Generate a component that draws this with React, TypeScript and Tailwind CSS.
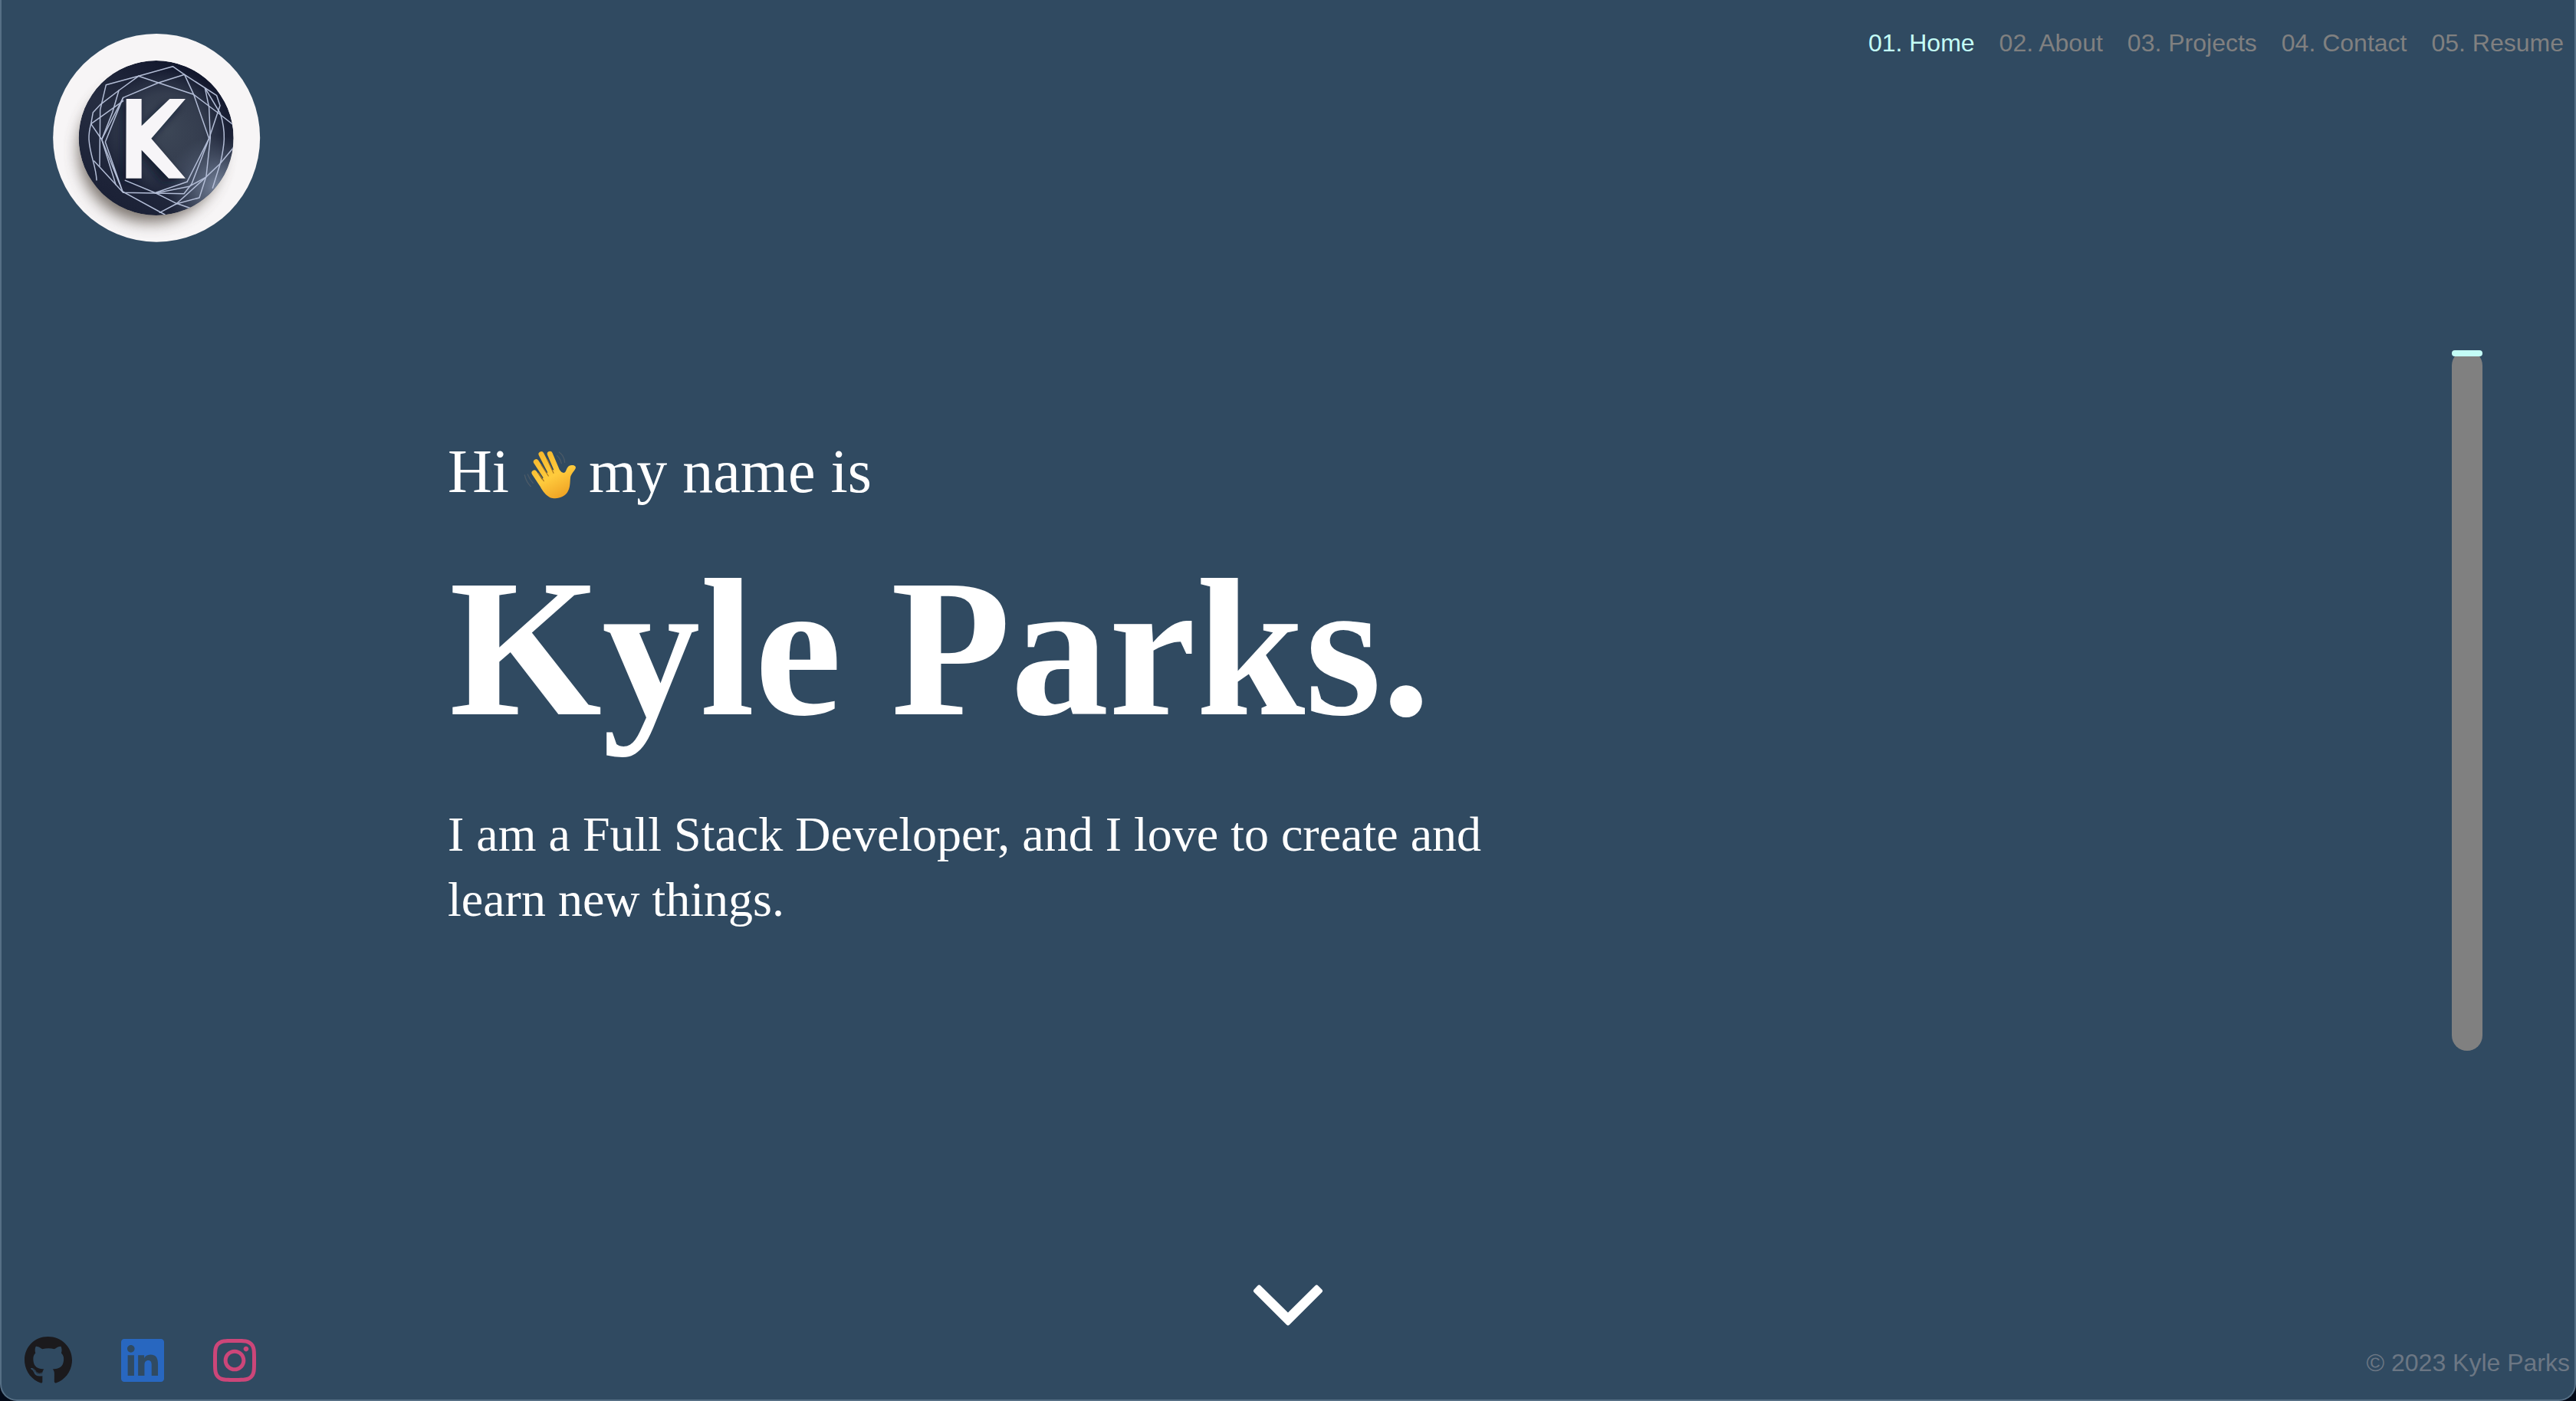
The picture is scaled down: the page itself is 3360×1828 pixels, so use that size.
import React from "react";
import { FaGithub, FaInstagram, FaLinkedin } from "react-icons/fa";

const links = ["01. Home", "02. About", "03. Projects", "04. Contact", "05. Resume"];

function Logo() {
  return (
    <svg className="h-[300px] w-[310px]" viewBox="0 0 930 900" fill="none">
      <defs>
        <linearGradient id="disc" x1="640" y1="190" x2="330" y2="720" gradientUnits="userSpaceOnUse">
          <stop offset="0" stopColor="#11162c" />
          <stop offset="0.5" stopColor="#262d41" />
          <stop offset="1" stopColor="#1b2136" />
        </linearGradient>
        <radialGradient id="core" cx="500" cy="420" r="240" gradientUnits="userSpaceOnUse">
          <stop offset="0" stopColor="#3c4656" />
          <stop offset="0.6" stopColor="#384152" stopOpacity="0.85" />
          <stop offset="1" stopColor="#374153" stopOpacity="0" />
        </radialGradient>
        <radialGradient id="glow" cx="700" cy="640" r="200" gradientUnits="userSpaceOnUse">
          <stop offset="0" stopColor="#75829a" />
          <stop offset="0.4" stopColor="#5b677d" stopOpacity="0.8" />
          <stop offset="1" stopColor="#4a566a" stopOpacity="0" />
        </radialGradient>
        <filter id="soft" x="-30%" y="-30%" width="160%" height="160%">
          <feGaussianBlur stdDeviation="28" />
        </filter>
        <filter id="softK" x="-30%" y="-30%" width="160%" height="160%">
          <feGaussianBlur stdDeviation="14" />
        </filter>
        <clipPath id="ring">
          <ellipse cx="462.500" cy="449.500" rx="405" ry="407.500" />
        </clipPath>
        <clipPath id="inner">
          <circle cx="461" cy="450" r="303" />
        </clipPath>
      </defs>
      <ellipse cx="462.500" cy="449.500" rx="405" ry="407.500" fill="#f7f5f6" />
      <g clipPath="url(#ring)">
        <circle cx="438" cy="500" r="280" fill="#5a5149" opacity="0.8" filter="url(#soft)" />
      </g>
      <g clipPath="url(#inner)">
        <circle cx="461" cy="450" r="303" fill="url(#disc)" />
        <circle cx="500" cy="420" r="240" fill="url(#core)" />
        <circle cx="700" cy="640" r="200" fill="url(#glow)" />
        <path d="M330 310h62v110l100-100h65L430 460l130 160h-80l-90-110v110h-60z" fill="#11172b" opacity="0.75" filter="url(#softK)" />
        <g stroke="#b3bdd6" strokeWidth="4.500" strokeLinejoin="round" strokeLinecap="round">
          <path d="M206 395 L214 350 L242 320 L315 264 L392 208 L526 170 L572 202 L698 284 L711 323 L668 452" />
          <path d="M392 208 L265 242 L242 340 L240 560" />
          <path d="M228 615C226 560 202 520 198 455C197 430 202 410 206 395L332 305" />
          <path d="M392 208 L470 234 L608 280 L706 354 L765 400" />
          <path d="M582 622 L460 664 M572 202 L470 234 L332 292 L248 456 L303 632" />
          <path d="M332 292 L262 466 L330 660 L248 456" />
          <path d="M315 264 L290 350 L248 456 L206 395" />
          <path d="M572 202 L608 280 L668 452 L582 622" />
          <path d="M652 254 L668 330 L673 450 L657 600 L630 684 L540 708 L475 742" />
          <path d="M652 254 L712 354C736 430 728 480 712 550L682 646" />
          <path d="M668 452 L600 630 L570 668 L332 664 L218 540" />
          <path d="M765 486 L710 552 L655 604 L590 640 L460 666" />
          <path d="M340 616 L460 666 L540 706 L592 724" />
          <path d="M655 604 L540 708" />
          <path d="M330 660 L495 750" />
        </g>
        <path d="M344 297h60v106l110-106h62L442 452l134 156h-66L404 497v111h-61z" fill="#f7f5f8" />
      </g>
    </svg>
  );
}

function WavingHand() {
  return (
    <svg className="mr-4 ml-[18px] inline-block h-[84px] w-[70px] align-[-18px]" viewBox="36 0 210 252" fill="none">
      <defs>
        <linearGradient id="skin" x1="90" y1="42" x2="186" y2="222" gradientUnits="userSpaceOnUse">
          <stop offset="0" stopColor="#f5b62c" />
          <stop offset="0.55" stopColor="#ffcb3d" />
          <stop offset="1" stopColor="#efa224" />
        </linearGradient>
      </defs>
      <g stroke="url(#skin)" strokeLinecap="round" strokeWidth="21">
        <path d="M142 49 172 120" />
        <path d="M108 50 150 132" />
        <path d="M88 80 134 150" />
        <path d="M81 123 116 176" />
      </g>
      <path d="M107 172 112 148 128 124 150 112 180 112C188 124 198 126 203 118C209 108 209 98 222 94C234 90 246 96 242 106C236 118 224 128 222 142C220 160 222 178 212 196C202 216 176 226 152 222C132 218 118 200 107 182z" fill="url(#skin)" />
      <g stroke="#a87420" strokeWidth="3.500" strokeLinecap="round">
        <path d="M131 70 156 124" />
        <path d="M108 92 136 135" />
        <path d="M97 124 118 155" />
      </g>
      <g stroke="#4b5a67" strokeWidth="4" strokeLinecap="round">
        <path d="M43 132Q50 160 67 176" />
        <path d="M55 129Q62 148 76 163" />
        <path d="M178 42Q198 56 200 82" />
        <path d="M170 56Q182 66 187 86" />
      </g>
    </svg>
  );
}

function ScrollTrack() {
  return (
    <div className="h-[914px] w-10 rounded-full bg-[#808080]">
      <div className="h-2 w-full rounded-full bg-[#c4fdf6]" />
    </div>
  );
}

export default function App() {
  return (
    <div className="h-[1828px] w-[3360px] overflow-hidden bg-[#030a18]">
      <div className="flex h-[1828px] flex-col rounded-b-[22px] border-x-2 border-b-2 border-[#566f85] bg-[#304a61] font-['Liberation_Sans',Arial,sans-serif] text-[32px]">
        <header className="flex h-[457px] items-start justify-between pt-[30px] pl-12">
          <Logo />
          <nav className="flex gap-8 pr-[14px] leading-[52px] text-[#808080]">
            {links.map((label, i) => (
              <a key={label} className={i === 0 ? "text-[#c4fdf6]" : ""}>
                {label}
              </a>
            ))}
          </nav>
        </header>
        <main className="flex h-[1200px] justify-between pr-[120px] pl-[582px] font-['Liberation_Serif','Times_New_Roman',serif] text-white">
          <div className="w-[1400px] pt-[112px]">
            <p className="h-[92px] text-[80px] leading-[92px] whitespace-nowrap">
              Hi
              <WavingHand />
              my name is
            </p>
            <h1 className="mt-[35px] ml-[2px] text-[256px] leading-[300px] font-bold whitespace-nowrap">Kyle Parks.</h1>
            <p className="mt-[50px] text-[64px] leading-[85px]">
              I am a Full Stack Developer, and I love to create and
              <br />
              learn new things.
            </p>
          </div>
          <ScrollTrack />
        </main>
        <div className="flex h-[86px] justify-center pt-[19px]">
          <svg className="h-[54px] w-[92px]" viewBox="102 78 276 162">
            <path d="M113 103 127 88 240 199 352 88 367 103 240 230z" fill="#fff" stroke="#fff" strokeWidth="16" strokeLinejoin="round" />
          </svg>
        </div>
        <footer className="flex items-start justify-between pr-[6px] pl-[30px]">
          <div className="flex gap-16">
            <FaGithub className="h-16 w-[62px] text-[#1b1a1d]" />
            <FaLinkedin className="h-16 w-14 text-[#2867c0]" />
            <FaInstagram className="h-16 w-14 text-[#cc4679]" />
          </div>
          <p className="mt-[17px] leading-[36px] text-[#6c7784]">© 2023 Kyle Parks</p>
        </footer>
      </div>
    </div>
  );
}
